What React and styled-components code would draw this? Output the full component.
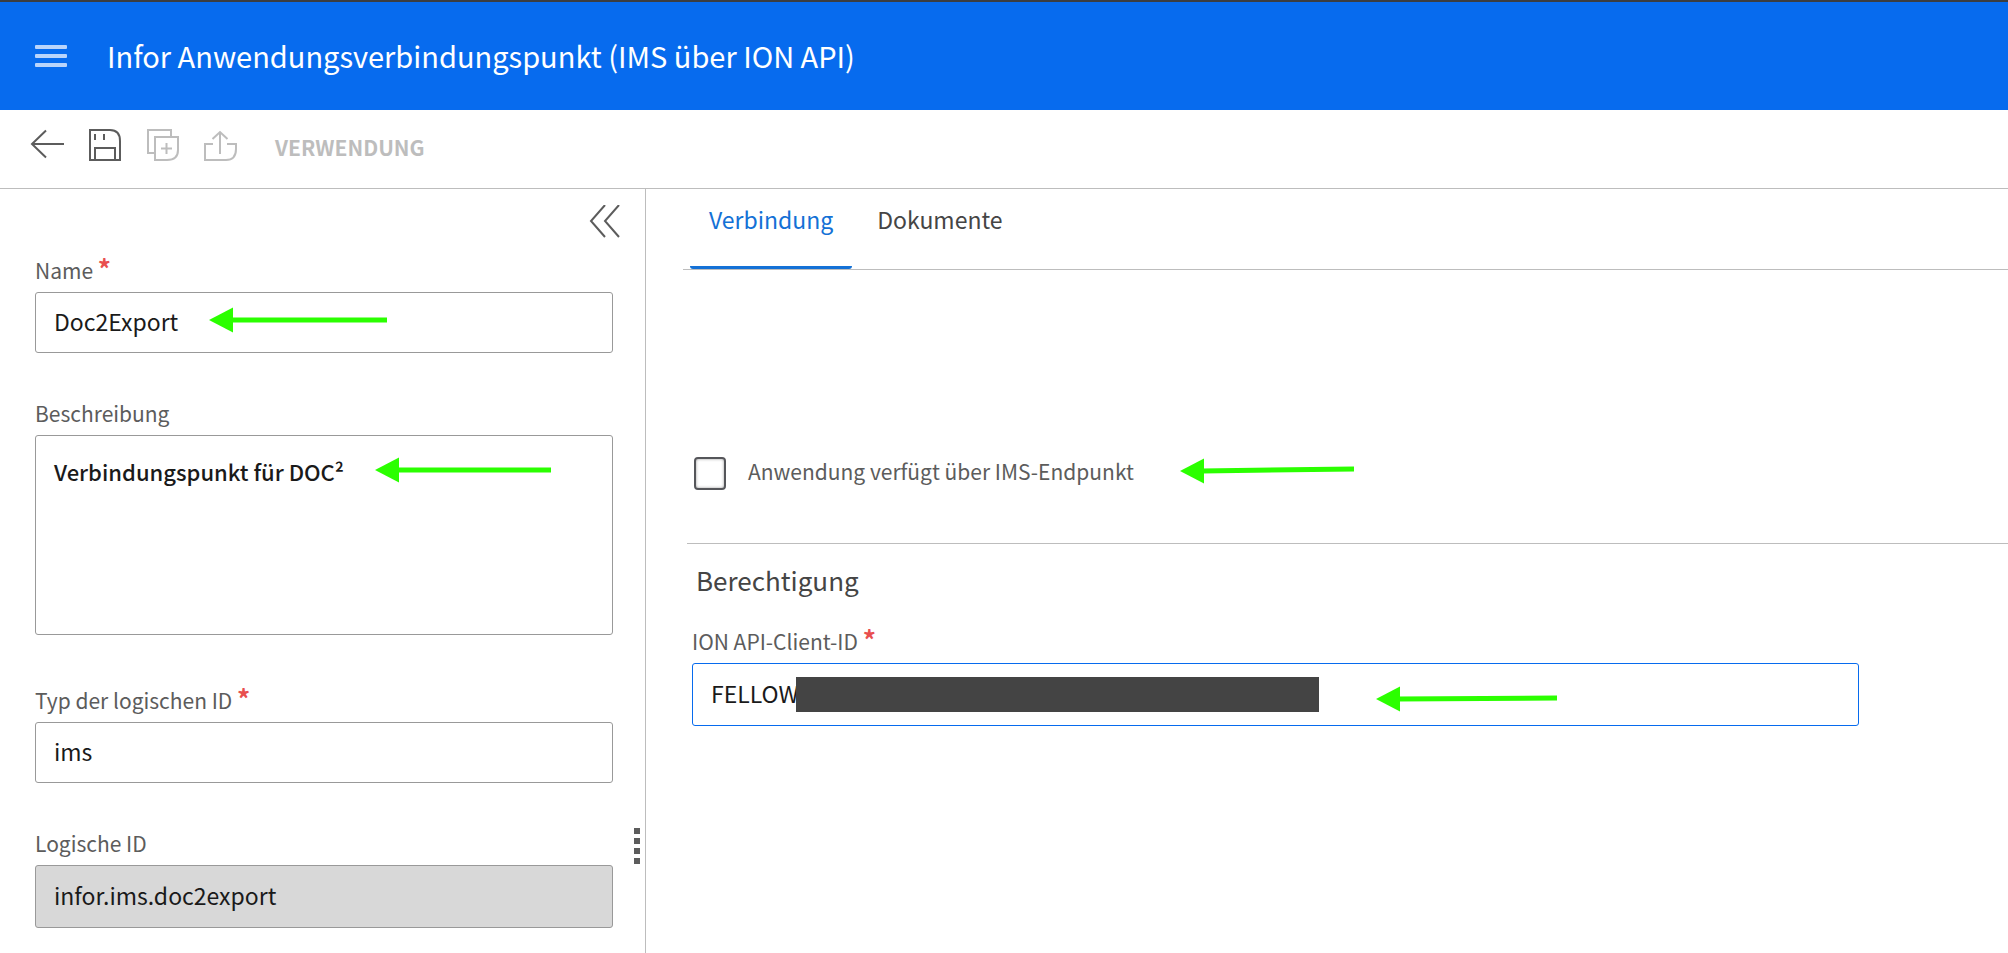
import React from "react";
import styled, { createGlobalStyle } from "styled-components";

const GlobalStyle = createGlobalStyle`
  *, *::before, *::after { box-sizing: border-box; }
  body { margin: 0; background: #fff; }
  body, button, input, textarea {
    font-family: "Noto Sans CJK SC", "Noto Sans", sans-serif;
  }
`;

const Page = styled.div`
  display: flex;
  flex-direction: column;
  min-height: 100vh;
  color: #1a1a1a;
`;

const Header = styled.header`
  display: flex;
  align-items: center;
  gap: 40px;
  height: 110px;
  padding: 0 35px;
  border-top: 2px solid #3b3d40;
  background: #076bee;
`;

const IconButton = styled.button`
  display: flex;
  padding: 0;
  border: 0;
  background: none;
  color: ${(p) => (p.disabled ? "#bdbdbd" : "#5c5c5c")};
  svg { display: block; }
`;

const Title = styled.h1`
  margin: 0;
  padding-bottom: 3px;
  color: #fff;
  font-size: 29px;
  font-weight: 400;
  line-height: 40px;
  white-space: nowrap;
`;

const Toolbar = styled.div`
  display: flex;
  align-items: center;
  gap: 24px;
  height: 79px;
  padding: 0 30px 8px;
  border-bottom: 1px solid #bdbdbd;
`;

const TextButton = styled.button`
  padding: 0;
  margin: 4px 0 0 13px;
  border: 0;
  background: none;
  color: #bdbdbd;
  font-size: 21px;
  font-weight: 700;
  line-height: 28px;
`;

const Body = styled.div`
  display: flex;
  flex: 1;
`;

const SidePanel = styled.aside`
  position: relative;
  display: flex;
  flex-direction: column;
  flex: 0 1 646px;
  padding: 16px 32px 24px 35px;
  border-right: 1px solid #bdbdbd;
`;

const CollapseRow = styled.div`
  display: flex;
  justify-content: flex-end;
  height: 51px;
  padding-right: 24px;
  margin-right: -32px;
`;

const FieldList = styled.div`
  display: flex;
  flex-direction: column;
  gap: 46px;
`;

const Field = styled.div`
  display: flex;
  flex-direction: column;
  gap: 8px;
  padding-bottom: ${(p) => (p.$multiline ? 5 : 0)}px;
`;

const Label = styled.label`
  color: #5c5c5c;
  font-size: 21px;
  line-height: 28px;
`;

const Required = styled.span`
  color: #e84f4f;
  font-size: 26px;
  font-weight: 700;
  line-height: 20px;
`;

const Control = styled.div`
  position: relative;
  display: flex;
`;

const TextInput = styled.input`
  width: 100%;
  height: ${(p) => (p.$tall ? 63 : 61)}px;
  padding: 0 18px 3px;
  border: 1px solid ${(p) => (p.$active ? "#076bee" : "#999")};
  border-radius: 3px;
  background: ${(p) => (p.readOnly ? "#d8d8d8" : "#fff")};
  color: #1a1a1a;
  font-size: 23px;
  line-height: 32px;
  outline: 0;
`;

const TextArea = styled.textarea`
  width: 100%;
  height: 200px;
  padding: 19px 18px;
  border: 1px solid #999;
  border-radius: 3px;
  color: #1a1a1a;
  font-size: 22px;
  font-weight: 500;
  line-height: 32px;
  resize: none;
  outline: 0;
`;

const SplitHandle = styled.div`
  position: absolute;
  right: 5px;
  top: 639px;
  display: flex;
  flex-direction: column;
  gap: 4px;
  span { width: 6px; height: 6px; background: #5c5c5c; }
`;

const Main = styled.main`
  flex: 1;
  min-width: 0;
  padding-left: 37px;
`;

const Tabs = styled.div`
  display: flex;
  gap: 6px;
  height: 81px;
  padding-left: 7px;
  border-bottom: 1px solid #bdbdbd;
`;

const Tab = styled.button`
  padding: 0 19px 17px;
  border: 0;
  border-bottom: 3px solid ${(p) => (p.$active ? "#1471d6" : "transparent")};
  border-radius: 0 0 3px 3px;
  background: none;
  color: ${(p) => (p.$active ? "#1471d6" : "#454545")};
  font-size: 23px;
  line-height: 32px;
`;

const Checks = styled.div`
  display: flex;
  padding: 187px 0 53px 11px;
`;

const CheckGroup = styled.div`
  position: relative;
  display: flex;
  align-items: center;
  gap: 22px;
`;

const Checkbox = styled.input`
  appearance: none;
  width: 32px;
  height: 33px;
  margin: 0;
  border: 2px solid #55565a;
  border-radius: 4px;
  background: #fff;
  box-shadow: inset 0 0 3px #999;
`;

const CheckLabel = styled(Label)`
  height: 33px;
  white-space: nowrap;
`;

const Section = styled.section`
  margin-left: 4px;
  padding: 20px 149px 0 5px;
  border-top: 1px solid #bdbdbd;
`;

const SectionTitle = styled.h2`
  margin: 0 0 31px 4px;
  color: #454545;
  font-size: 26px;
  font-weight: 400;
  line-height: 32px;
`;

const Redaction = styled.span`
  position: absolute;
  left: 104px;
  top: 14px;
  width: 523px;
  height: 35px;
  background: #444;
`;

const Pointer = styled.svg`
  position: absolute;
  left: ${(p) => p.$left}px;
  top: ${(p) => p.$top}px;
  pointer-events: none;
`;

function Arrow({ left, top, length, rise = 0 }) {
  return (
    <Pointer $left={left} $top={top} width={length} height="26" aria-hidden="true">
      <path d="M0 13 24 0.5V25.5Z" fill="#2bff00" />
      <path d={`M22 13 ${length} ${13 - rise}`} stroke="#2bff00" strokeWidth="5" />
    </Pointer>
  );
}

function Icon({ children, width = 34, height = 34, stroke = 2 }) {
  return (
    <svg width={width} height={height} viewBox={`0 0 ${width} ${height}`} fill="none" stroke="currentColor" strokeWidth={stroke} aria-hidden="true">
      {children}
    </svg>
  );
}

function RequiredLabel({ htmlFor, children }) {
  return (
    <Label htmlFor={htmlFor}>
      {children} <Required>*</Required>
    </Label>
  );
}

export default function App() {
  return (
    <Page>
      <GlobalStyle />
      <Header>
        <IconButton aria-label="Menü">
          <svg width="32" height="24" viewBox="0 0 32 24" fill="#b9d4fb" aria-hidden="true">
            <rect y="1" width="32" height="4" rx="1" />
            <rect y="10" width="32" height="4" rx="1" />
            <rect y="19" width="32" height="4" rx="1" />
          </svg>
        </IconButton>
        <Title>Infor Anwendungsverbindungspunkt (IMS über ION API)</Title>
      </Header>
      <Toolbar>
        <IconButton aria-label="Zurück">
          <Icon><path d="M34 16H2M16 2.500 2 16 16 29.500" /></Icon>
        </IconButton>
        <IconButton aria-label="Speichern">
          <Icon><path d="M2 2H22Q32 2 32 13V32H2ZM7 32V20H27V32M7 6V12M16 6V12" /></Icon>
        </IconButton>
        <IconButton aria-label="Duplizieren" disabled>
          <Icon><path d="M8 25H2V2H25V8M9 9H32V22Q32 32 21 32H9ZM20.500 15V26M15 20.500H26" /></Icon>
        </IconButton>
        <IconButton aria-label="Exportieren" disabled>
          <Icon><path d="M9 16H1V32H22Q32 32 32 21V16H23M16 26V4M8.500 11 16 4 23.500 11" /></Icon>
        </IconButton>
        <TextButton disabled>VERWENDUNG</TextButton>
      </Toolbar>
      <Body>
        <SidePanel>
          <CollapseRow>
            <IconButton aria-label="Bereich einklappen">
              <Icon width={32} height={34}><path d="M16 0 2 16 16 32M30 0 16 16 30 32" /></Icon>
            </IconButton>
          </CollapseRow>
          <FieldList>
            <Field>
              <RequiredLabel htmlFor="name">Name</RequiredLabel>
              <Control>
                <TextInput id="name" defaultValue="Doc2Export" />
                <Arrow left={174} top={15} length={178} />
              </Control>
            </Field>
            <Field $multiline>
              <Label htmlFor="description">Beschreibung</Label>
              <Control>
                <TextArea id="description" defaultValue="Verbindungspunkt für DOC²" />
                <Arrow left={340} top={22} length={176} />
              </Control>
            </Field>
            <Field>
              <RequiredLabel htmlFor="id-type">Typ der logischen ID</RequiredLabel>
              <Control>
                <TextInput id="id-type" defaultValue="ims" />
              </Control>
            </Field>
            <Field>
              <Label htmlFor="logical-id">Logische ID</Label>
              <Control>
                <TextInput id="logical-id" $tall readOnly defaultValue="infor.ims.doc2export" />
              </Control>
            </Field>
          </FieldList>
          <SplitHandle><span /><span /><span /><span /></SplitHandle>
        </SidePanel>
        <Main>
          <Tabs role="tablist">
            <Tab role="tab" aria-selected="true" $active>Verbindung</Tab>
            <Tab role="tab" aria-selected="false">Dokumente</Tab>
          </Tabs>
          <Checks>
            <CheckGroup>
              <Checkbox type="checkbox" id="ims-endpoint" />
              <CheckLabel htmlFor="ims-endpoint">Anwendung verfügt über IMS-Endpunkt</CheckLabel>
              <Arrow left={486} top={1} length={174} rise={2} />
            </CheckGroup>
          </Checks>
          <Section>
            <SectionTitle>Berechtigung</SectionTitle>
            <Field>
              <RequiredLabel htmlFor="client-id">ION API-Client-ID</RequiredLabel>
              <Control>
                <TextInput id="client-id" $tall $active defaultValue="FELLOW" />
                <Redaction />
                <Arrow left={684} top={23} length={181} rise={1} />
              </Control>
            </Field>
          </Section>
        </Main>
      </Body>
    </Page>
  );
}
